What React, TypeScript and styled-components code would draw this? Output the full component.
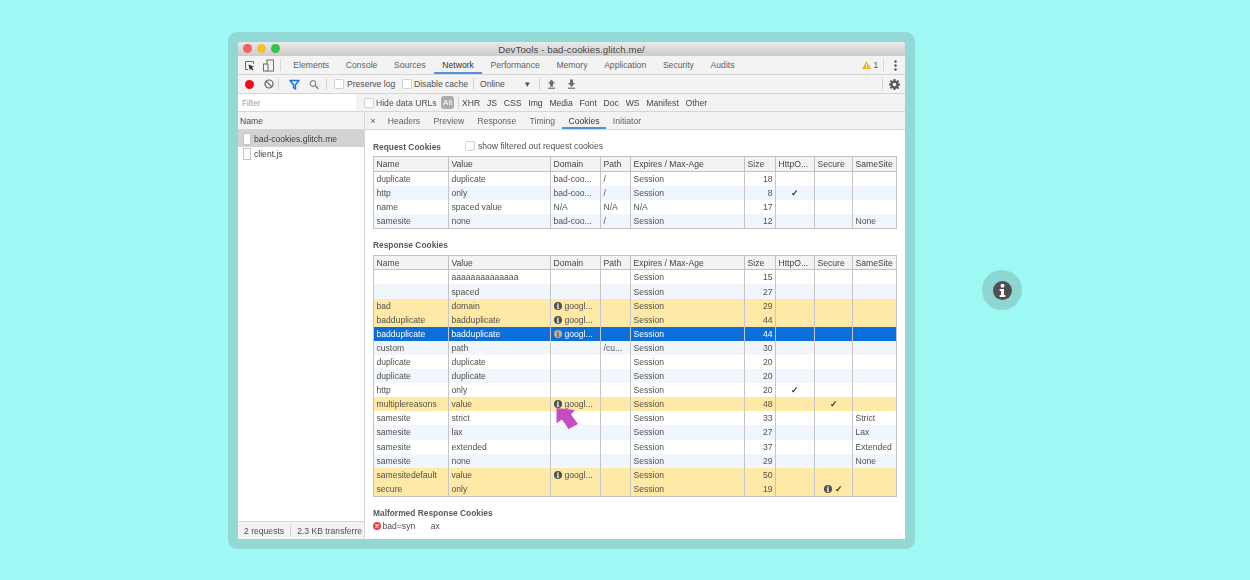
import React from "react";
import styled, { createGlobalStyle } from "styled-components";

const GlobalStyle = createGlobalStyle`
  html, body {
    margin: 0;
    padding: 0;
    background: #9ef8f4;
    font-family: "Liberation Sans", Arial, sans-serif;
  }
`;

const Page = styled.div`
  width: 1250px;
  height: 580px;
  display: flex;
  align-items: flex-start;
  padding: 32px 0 0 228px;
  box-sizing: border-box;
  overflow: hidden;
`;

const Frame = styled.div`
  width: 687px;
  height: 517px;
  padding: 10px;
  box-sizing: border-box;
  background: #92d9d6;
  border-radius: 9px;
  flex: none;
`;

const Browser = styled.div`
  position: relative;
  width: 667px;
  height: 497px;
  display: flex;
  flex-direction: column;
  background: #fff;
  border-radius: 3px 3px 0 0;
  overflow: hidden;
  color: #505050;
  font-size: 8.6px;
  filter: blur(0.4px);
`;

const TitleBar = styled.div`
  height: 14px;
  flex: none;
  display: flex;
  align-items: center;
  position: relative;
  justify-content: center;
  background: linear-gradient(#e9e9e9, #cbcbcb);
  color: #484848;
  font-size: 9.6px;
  letter-spacing: 0.1px;
`;

const Lights = styled.div`
  position: absolute;
  left: 5px;
  top: 2px;
  display: flex;
  gap: 5px;
`;

const Light = styled.span<{ $color: string }>`
  width: 9px;
  height: 9px;
  border-radius: 50%;
  background: ${(p) => p.$color};
`;

const Bar = styled.div<{ $h: number; $bg?: string }>`
  height: ${(p) => p.$h}px;
  flex: none;
  display: flex;
  align-items: center;
  box-sizing: border-box;
  background: ${(p) => p.$bg || "#f3f3f3"};
  border-bottom: 1px solid #d6d6d6;
  white-space: nowrap;
`;

const IconSlot = styled.span<{ $w: number }>`
  width: ${(p) => p.$w}px;
  flex: none;
  display: flex;
  align-items: center;
  justify-content: center;
`;

const Divider = styled.span<{ $mx?: number }>`
  width: 1px;
  height: 12px;
  flex: none;
  background: #d4d4d4;
  margin: 0 ${(p) => p.$mx ?? 5}px;
`;

const Tab = styled.div<{ $active?: boolean; $px: number }>`
  height: 100%;
  box-sizing: border-box;
  display: flex;
  align-items: center;
  padding: 0 ${(p) => p.$px}px;
  color: ${(p) => (p.$active ? "#333" : "#5f5f5f")};
  box-shadow: ${(p) => (p.$active ? "inset 0 -2px 0 #4f93dc" : "none")};
`;

const Spacer = styled.div`
  flex: 1;
`;

const Check = styled.span<{ $mr?: number; $ml?: number }>`
  width: 8px;
  height: 8px;
  flex: none;
  border: 1px solid #d2d2d2;
  border-radius: 2px;
  background: #fff;
  margin-right: ${(p) => p.$mr ?? 3}px;
  margin-left: ${(p) => p.$ml ?? 0}px;
`;

const Label = styled.span<{ $w?: number }>`
  flex: none;
  width: ${(p) => (p.$w ? `${p.$w}px` : "auto")};
`;

const FilterInput = styled.div`
  width: 118px;
  height: 100%;
  flex: none;
  box-sizing: border-box;
  background: #fff;
  display: flex;
  align-items: center;
  padding-left: 4px;
  color: #9a9a9a;
  font-size: 8.4px;
`;

const FilterType = styled.span`
  flex: none;
  margin-right: 6.8px;
  color: #444;
`;

const AllPill = styled.span`
  flex: none;
  width: 13px;
  height: 13px;
  border-radius: 3px;
  background: #adadad;
  color: #fff;
  display: flex;
  align-items: center;
  justify-content: center;
  font-size: 8px;
`;

const Body = styled.div`
  flex: 1;
  min-height: 0;
  display: flex;
`;

const Sidebar = styled.div`
  width: 127px;
  flex: none;
  display: flex;
  flex-direction: column;
  border-right: 1px solid #d6d6d6;
  box-sizing: border-box;
`;

const SideHead = styled.div`
  height: 18px;
  flex: none;
  display: flex;
  align-items: center;
  padding-left: 2px;
  box-sizing: border-box;
  background: #f3f3f3;
  border-bottom: 1px solid #d6d6d6;
  color: #444;
`;

const FileRow = styled.div<{ $selected?: boolean }>`
  height: ${(p) => (p.$selected ? 17 : 13)}px;
  display: flex;
  align-items: center;
  padding-left: 5px;
  gap: 3px;
  color: #3c3c3c;
  background: ${(p) => (p.$selected ? "#d2d2d2" : "transparent")};
`;

const FileIcon = styled.span`
  width: 6px;
  height: 10px;
  flex: none;
  background: #fff;
  border: 1px solid #c4c4c4;
`;

const SideFoot = styled.div`
  height: 18px;
  margin-top: auto;
  flex: none;
  display: flex;
  align-items: center;
  padding-left: 6px;
  box-sizing: border-box;
  background: #f3f3f3;
  border-top: 1px solid #d6d6d6;
  white-space: nowrap;
  overflow: hidden;
`;

const FootClip = styled.span`
  width: 65px;
  flex: none;
  overflow: hidden;
`;

const Main = styled.div`
  flex: 1;
  min-width: 0;
  display: flex;
  flex-direction: column;
`;

const Content = styled.div`
  flex: 1;
  padding: 0 8px;
`;

const SectionHead = styled.div<{ $h: number; $pt: number }>`
  height: ${(p) => p.$h}px;
  box-sizing: border-box;
  padding-top: ${(p) => p.$pt}px;
  display: flex;
  align-items: center;
  font-weight: bold;
  font-size: 8.4px;
  color: #5a5a5a;
`;

const ShowFiltered = styled.span`
  display: flex;
  align-items: center;
  font-weight: normal;
  font-size: 8.6px;
  color: #505050;
  margin: -2px 0 0 24px;
`;

const Table = styled.table`
  width: 524px;
  border-collapse: separate;
  border-spacing: 0;
  table-layout: fixed;
  border: 1px solid #c2c2c2;
  font-size: 8.6px;
`;

const HeadCell = styled.th<{ $h: number }>`
  height: ${(p) => p.$h}px;
  padding: 0 2.5px;
  box-sizing: border-box;
  font-weight: normal;
  text-align: left;
  background: #f3f3f3;
  border-bottom: 1px solid #c2c2c2;
  color: #444;
  white-space: nowrap;
  overflow: hidden;
  &:not(:last-child) {
    border-right: 1px solid #c2c2c2;
  }
`;

type RowKind = "plain" | "warn" | "selected";

const Row = styled.tr<{ $kind: RowKind; $even: boolean }>`
  background: ${(p) =>
    p.$kind === "warn" ? "#ffe9a6" : p.$kind === "selected" ? "#0b6fdb" : p.$even ? "#f1f6fd" : "#fff"};
  color: ${(p) => (p.$kind === "selected" ? "#fff" : "#505050")};
`;

const Cell = styled.td<{ $num?: boolean; $center?: boolean }>`
  height: 14.1px;
  padding: 0 2.5px;
  box-sizing: border-box;
  line-height: 14px;
  white-space: nowrap;
  overflow: hidden;
  text-align: ${(p) => (p.$num ? "right" : p.$center ? "center" : "left")};
  &:not(:last-child) {
    border-right: 1px solid #c6c6c6;
  }
`;

const CellInner = styled.span`
  display: inline-flex;
  height: 14px;
  align-items: center;
  gap: 3px;
  vertical-align: top;
`;

const Tick = styled.span`
  color: #2e2e2e;
  font-weight: bold;
`;

const MalformedRow = styled.div`
  display: flex;
  align-items: center;
  gap: 1.5px;
  height: 12px;
`;

const MalformedValue = styled.span`
  margin-left: 14px;
`;

const PointerArrow = styled.svg`
  position: absolute;
  left: 316px;
  top: 364px;
`;

const Badge = styled.div`
  width: 40px;
  height: 40px;
  flex: none;
  border-radius: 50%;
  margin: 238px 0 0 67px;
  background: #8ed6d4;
  display: flex;
  align-items: center;
  justify-content: center;
`;

const InfoDot = ({ size = 8, dim }: { size?: number; dim?: boolean }) => (
  <svg width={size} height={size} viewBox="0 0 20 20" style={{ flex: "none" }}>
    <circle cx="10" cy="10" r="10" fill={dim ? "#b9b2a6" : "#4f4f4f"} />
    <circle cx="10" cy="5" r="2.1" fill={dim ? "#a5490f" : "#fff"} />
    <path d="M7 8.4h4.6v6.4H13v2H7v-2h1.5v-4.4H7z" fill={dim ? "#a5490f" : "#fff"} />
  </svg>
);

const InspectIcon = () => (
  <svg width="11" height="11" viewBox="0 0 11 11" fill="none">
    <path d="M4 9.5H1.5v-8h8V4" stroke="#6d6d6d" strokeWidth="1" />
    <path d="M4.5 4.5l5.5 2.3-2.2.8 1.7 2-1 .9-1.7-2-1 1.9z" fill="#333" />
  </svg>
);

const DeviceIcon = () => (
  <svg width="11" height="13" viewBox="0 0 11 13" fill="none">
    <rect x="4" y="1" width="6.5" height="11" stroke="#6d6d6d" />
    <rect x="0.5" y="5" width="4.5" height="7" fill="#f3f3f3" stroke="#6d6d6d" />
  </svg>
);

const FilterIcon = () => (
  <svg width="11" height="11" viewBox="0 0 11 11" fill="none">
    <path d="M1 1.5h9L6.5 5.8V10L4.5 8.6V5.8z" stroke="#1a73d9" strokeWidth="1.5" strokeLinejoin="round" />
  </svg>
);

const SearchIcon = () => (
  <svg width="11" height="11" viewBox="0 0 11 11" fill="none">
    <circle cx="4.4" cy="4.4" r="3.2" stroke="#6d6d6d" strokeWidth="1.1" />
    <path d="M6.8 6.8l3.4 3.4" stroke="#6d6d6d" strokeWidth="1.3" />
  </svg>
);

const BlockIcon = () => (
  <svg width="10" height="10" viewBox="0 0 10 10" fill="none">
    <circle cx="5" cy="5" r="4" stroke="#5f5f5f" strokeWidth="1.2" />
    <path d="M2.2 2.2l5.6 5.6" stroke="#5f5f5f" strokeWidth="1.2" />
  </svg>
);

const Record = () => (
  <svg width="9" height="9" viewBox="0 0 9 9">
    <circle cx="4.5" cy="4.5" r="4.5" fill="#ee0f1c" />
  </svg>
);

const ArrowIcon = ({ up }: { up?: boolean }) => (
  <svg width="9" height="10" viewBox="0 0 9 10">
    <path d={up ? "M4.5 0.5L8 4.5H6v3H3v-3H1z" : "M3 0.5h3v3.5h2L4.5 8 1 4h2z"} fill="#6d6d6d" />
    <rect x="1" y="8.6" width="7" height="1.2" fill="#6d6d6d" />
  </svg>
);

const WarnIcon = () => (
  <svg width="9" height="8" viewBox="0 0 9 8" style={{ flex: "none" }}>
    <path d="M4.5 0L9 8H0z" fill="#f2b21c" />
    <rect x="4" y="2.6" width="1" height="3" fill="#fff" />
    <rect x="4" y="6" width="1" height="1" fill="#fff" />
  </svg>
);

const DotsIcon = () => (
  <svg width="3" height="11" viewBox="0 0 3 11">
    <circle cx="1.5" cy="1.5" r="1.2" fill="#555" />
    <circle cx="1.5" cy="5.5" r="1.2" fill="#555" />
    <circle cx="1.5" cy="9.5" r="1.2" fill="#555" />
  </svg>
);

const GearIcon = () => (
  <svg width="11" height="11" viewBox="0 0 24 24">
    <path
      fillRule="evenodd"
      fill="#5c5c5c"
      d="M10 0h4l.6 3.2 2.2.9L19.5 2.2l2.8 2.8-1.9 2.7.9 2.2L24 10.5v3.5l-2.7.6-.9 2.2 1.9 2.7-2.8 2.8-2.7-1.9-2.2.9L14 24h-4l-.6-3.2-2.2-.9-2.7 1.9-2.8-2.8 1.9-2.7-.9-2.2L0 14v-3.5l2.7-.6.9-2.2L1.7 5l2.8-2.8 2.7 1.9 2.2-.9zM12 8a4 4 0 100 8 4 4 0 000-8z"
    />
  </svg>
);

const ErrorIcon = () => (
  <svg width="8" height="8" viewBox="0 0 8 8" style={{ flex: "none" }}>
    <circle cx="4" cy="4" r="4" fill="#e8414a" />
    <path d="M2.5 2.5l3 3M5.5 2.5l-3 3" stroke="#fff" strokeWidth="1.1" />
  </svg>
);

const columns = [
  { name: "Name", width: 75 },
  { name: "Value", width: 102 },
  { name: "Domain", width: 50 },
  { name: "Path", width: 30 },
  { name: "Expires / Max-Age", width: 114 },
  { name: "Size", width: 31 },
  { name: "HttpO...", width: 39 },
  { name: "Secure", width: 38 },
  { name: "SameSite", width: 43 },
];

type Cookie = {
  name: string;
  value: string;
  domain?: string;
  domainInfo?: boolean;
  path?: string;
  expires?: string;
  size: number;
  http?: boolean;
  secure?: boolean;
  secureInfo?: boolean;
  same?: string;
  kind?: RowKind;
};

const requestCookies: Cookie[] = [
  { name: "duplicate", value: "duplicate", domain: "bad-coo...", path: "/", size: 18 },
  { name: "http", value: "only", domain: "bad-coo...", path: "/", size: 8, http: true },
  { name: "name", value: "spaced value", domain: "N/A", path: "N/A", expires: "N/A", size: 17 },
  { name: "samesite", value: "none", domain: "bad-coo...", path: "/", size: 12, same: "None" },
];

const googl = { domain: "googl...", domainInfo: true };

const responseCookies: Cookie[] = [
  { name: "", value: "aaaaaaaaaaaaaa", size: 15 },
  { name: "", value: "spaced", size: 27 },
  { name: "bad", value: "domain", ...googl, size: 29, kind: "warn" },
  { name: "badduplicate", value: "badduplicate", ...googl, size: 44, kind: "warn" },
  { name: "badduplicate", value: "badduplicate", ...googl, size: 44, kind: "selected" },
  { name: "custom", value: "path", path: "/cu...", size: 30 },
  { name: "duplicate", value: "duplicate", size: 20 },
  { name: "duplicate", value: "duplicate", size: 20 },
  { name: "http", value: "only", size: 20, http: true },
  { name: "multiplereasons", value: "value", ...googl, size: 48, secure: true, kind: "warn" },
  { name: "samesite", value: "strict", size: 33, same: "Strict" },
  { name: "samesite", value: "lax", size: 27, same: "Lax" },
  { name: "samesite", value: "extended", size: 37, same: "Extended" },
  { name: "samesite", value: "none", size: 29, same: "None" },
  { name: "samesitedefault", value: "value", ...googl, size: 50, kind: "warn" },
  { name: "secure", value: "only", size: 19, secure: true, secureInfo: true, kind: "warn" },
];

const CookieTable = ({ rows, headHeight }: { rows: Cookie[]; headHeight: number }) => (
  <Table>
    <colgroup>
      {columns.map((c) => (
        <col key={c.name} style={{ width: c.width }} />
      ))}
    </colgroup>
    <thead>
      <tr>
        {columns.map((c) => (
          <HeadCell key={c.name} $h={headHeight}>
            {c.name}
          </HeadCell>
        ))}
      </tr>
    </thead>
    <tbody>
      {rows.map((r, i) => (
        <Row key={i} $kind={r.kind || "plain"} $even={i % 2 === 1}>
          <Cell>{r.name}</Cell>
          <Cell>{r.value}</Cell>
          <Cell>
            <CellInner>
              {r.domainInfo && <InfoDot dim={r.kind === "selected"} />}
              {r.domain}
            </CellInner>
          </Cell>
          <Cell>{r.path}</Cell>
          <Cell>{r.expires || "Session"}</Cell>
          <Cell $num>{r.size}</Cell>
          <Cell $center>{r.http && <Tick>✓</Tick>}</Cell>
          <Cell $center>
            <CellInner>
              {r.secureInfo && <InfoDot />}
              {r.secure && <Tick>✓</Tick>}
            </CellInner>
          </Cell>
          <Cell>{r.same}</Cell>
        </Row>
      ))}
    </tbody>
  </Table>
);

const mainTabs = ["Elements", "Console", "Sources", "Network", "Performance", "Memory", "Application", "Security", "Audits"];
const detailTabs = ["Headers", "Preview", "Response", "Timing", "Cookies", "Initiator"];
const filterTypes = ["XHR", "JS", "CSS", "Img", "Media", "Font", "Doc", "WS", "Manifest", "Other"];

export default function App() {
  return (
    <Page>
      <GlobalStyle />
      <Frame>
        <Browser>
          <TitleBar>
            <Lights>
              <Light $color="#f0625a" />
              <Light $color="#f7bd2f" />
              <Light $color="#2fc840" />
            </Lights>
            DevTools - bad-cookies.glitch.me/
          </TitleBar>

          <Bar $h={19}>
            <IconSlot $w={23}>
              <InspectIcon />
            </IconSlot>
            <IconSlot $w={14}>
              <DeviceIcon />
            </IconSlot>
            <Divider $mx={4.5} />
            {mainTabs.map((t) => (
              <Tab key={t} $px={8.35} $active={t === "Network"}>
                {t}
              </Tab>
            ))}
            <Spacer />
            <WarnIcon />
            <Label $w={10}>&nbsp;1</Label>
            <Divider $mx={2} />
            <IconSlot $w={19}>
              <DotsIcon />
            </IconSlot>
          </Bar>

          <Bar $h={19}>
            <IconSlot $w={22}>
              <Record />
            </IconSlot>
            <IconSlot $w={18}>
              <BlockIcon />
            </IconSlot>
            <Divider $mx={0} />
            <IconSlot $w={30}>
              <FilterIcon />
            </IconSlot>
            <IconSlot $w={10}>
              <SearchIcon />
            </IconSlot>
            <Divider $mx={7} />
            <Check />
            <Label $w={55}>Preserve log</Label>
            <Check $mr={2} />
            <Label $w={53}>Disable cache</Label>
            <Divider $mx={6} />
            <Label $w={45}>Online</Label>
            <Label $w={14}>▾</Label>
            <Divider $mx={0} />
            <IconSlot $w={22}>
              <ArrowIcon up />
            </IconSlot>
            <IconSlot $w={19}>
              <ArrowIcon />
            </IconSlot>
            <Spacer />
            <Divider $mx={0} />
            <IconSlot $w={22}>
              <GearIcon />
            </IconSlot>
          </Bar>

          <Bar $h={18}>
            <FilterInput>Filter</FilterInput>
            <Check $ml={8} $mr={2} />
            <Label $w={65}>Hide data URLs</Label>
            <AllPill>All</AllPill>
            <Divider $mx={3.5} />
            {filterTypes.map((t) => (
              <FilterType key={t}>{t}</FilterType>
            ))}
          </Bar>

          <Body>
            <Sidebar>
              <SideHead>Name</SideHead>
              <FileRow $selected>
                <FileIcon />
                bad-cookies.glitch.me
              </FileRow>
              <FileRow>
                <FileIcon />
                client.js
              </FileRow>
              <SideFoot>
                2 requests
                <Divider $mx={6} />
                <FootClip>2.3 KB transferred</FootClip>
              </SideFoot>
            </Sidebar>

            <Main>
              <Bar $h={18}>
                <IconSlot $w={16}>×</IconSlot>
                {detailTabs.map((t) => (
                  <Tab key={t} $px={6.7} $active={t === "Cookies"}>
                    {t}
                  </Tab>
                ))}
              </Bar>
              <Content>
                <SectionHead $h={26} $pt={8}>
                  Request Cookies
                  <ShowFiltered>
                    <Check />
                    show filtered out request cookies
                  </ShowFiltered>
                </SectionHead>
                <CookieTable rows={requestCookies} headHeight={15} />
                <SectionHead $h={26} $pt={6}>
                  Response Cookies
                </SectionHead>
                <CookieTable rows={responseCookies} headHeight={14} />
                <SectionHead $h={23} $pt={9}>
                  Malformed Response Cookies
                </SectionHead>
                <MalformedRow>
                  <ErrorIcon />
                  bad=syn
                  <MalformedValue>ax</MalformedValue>
                </MalformedRow>
              </Content>
            </Main>
          </Body>

          <PointerArrow width="26" height="26" viewBox="0 0 26 26">
            <path d="M2.5 2L21 4L17 8.5L24 18L14.5 23L8 13.5L2.5 17.5Z" fill="#c64cc4" />
          </PointerArrow>
        </Browser>
      </Frame>

      <Badge>
        <InfoDot size={19} />
      </Badge>
    </Page>
  );
}
